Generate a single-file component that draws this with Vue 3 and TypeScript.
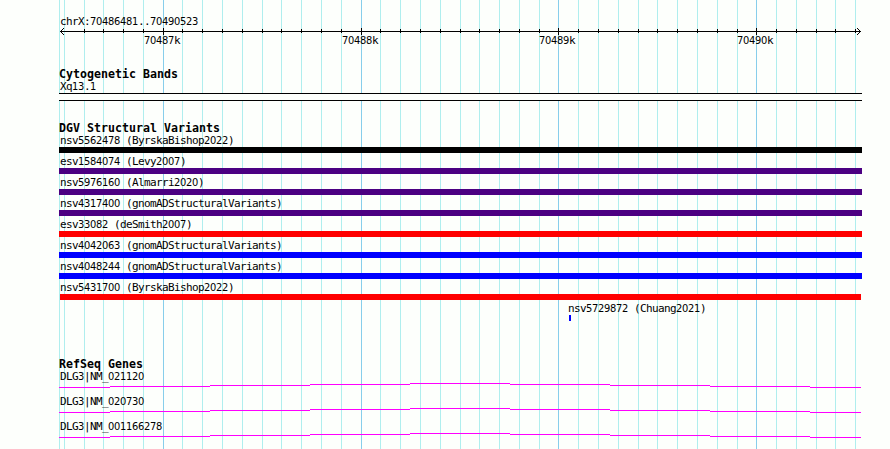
<script setup lang="ts">
import { defineComponent, h } from 'vue'

interface Variant {
  name: string
  tone: string
}

// Splits a label so that figures get their own face, on the same 6px pitch.
const PixelText = defineComponent({
  props: { text: { type: String, required: true } },
  setup(props) {
    return () =>
      h(
        'span',
        (props.text.match(/\d+|\D+/g) ?? []).map((part) =>
          /\d/.test(part) ? h('span', { class: 'figures' }, part) : part,
        ),
      )
  },
})

const minorLines = [
  59, 64, 84, 103, 123, 143, 182, 202, 222, 242, 262, 281, 301, 321, 341, 380, 400, 420, 440, 460,
  479, 499, 519, 539, 578, 598, 618, 638, 657, 677, 697, 717, 737, 776, 796, 816, 835, 855,
]
const majorLines = [163, 361, 558, 756]
const scaleLabels = ['70487k', '70488k', '70489k', '70490k']

const variants: Variant[] = [
  { name: 'nsv5562478 (ByrskaBishop2022)', tone: 'black' },
  { name: 'esv1584074 (Levy2007)', tone: 'indigo' },
  { name: 'nsv5976160 (Almarri2020)', tone: 'indigo' },
  { name: 'nsv4317400 (gnomADStructuralVariants)', tone: 'indigo' },
  { name: 'esv33082 (deSmith2007)', tone: 'red' },
  { name: 'nsv4042063 (gnomADStructuralVariants)', tone: 'blue' },
  { name: 'nsv4048244 (gnomADStructuralVariants)', tone: 'blue' },
  { name: 'nsv5431700 (ByrskaBishop2022)', tone: 'red inset' },
]

const genes = ['DLG3|NM_021120', 'DLG3|NM_020730', 'DLG3|NM_001166278']
const genePath =
  'M0 4.5H51M51 3.5H151M151 2.5H251M251 1.5H351M351 .5H451M451 1.5H551M551 2.5H651M651 3.5H751M751 4.5H802'
</script>

<template>
  <main class="browser">
    <svg class="grid" width="890" height="449" shape-rendering="crispEdges" aria-hidden="true">
      <rect v-for="x in minorLines" :key="x" :x="x" y="0" width="1" height="449" fill="#afeeee" />
      <rect v-for="x in majorLines" :key="x" :x="x" y="0" width="1" height="449" fill="#87ceeb" />
    </svg>
    <div class="content">
      <header class="ruler">
        <div class="label"><PixelText text="chrX:70486481..70490523" /></div>
        <svg class="axis" width="803" height="8" shape-rendering="crispEdges" aria-hidden="true">
          <rect x="1" y="3" width="801" height="1" />
          <template v-for="x in minorLines" :key="x">
            <rect v-if="x > 64" :x="x - 59" y="1" width="1" height="4" />
          </template>
          <rect v-for="x in majorLines" :key="x" :x="x - 59" y="0" width="1" height="7" />
          <path d="M2 2h1v1h-1zM3 1h1v1h-1zM4 0h1v1h-1zM2 4h1v1h-1zM3 5h1v1h-1zM4 6h1v1h-1z" />
          <path d="M800 2h1v1h-1zM799 1h1v1h-1zM798 0h1v1h-1zM800 4h1v1h-1zM799 5h1v1h-1zM798 6h1v1h-1z" />
        </svg>
        <div class="scale">
          <PixelText v-for="s in scaleLabels" :key="s" :text="s" />
        </div>
      </header>

      <section class="bands">
        <h2>Cytogenetic Bands</h2>
        <div class="label"><PixelText text="Xq13.1" /></div>
        <div class="band"></div>
      </section>

      <section class="variants">
        <h2>DGV Structural Variants</h2>
        <div v-for="v in variants" :key="v.name" class="variant">
          <div class="label"><PixelText :text="v.name" /></div>
          <div class="bar" :class="v.tone"></div>
        </div>
        <div class="variant short">
          <div class="label"><PixelText text="nsv5729872 (Chuang2021)" /></div>
          <div class="bar blue"></div>
        </div>
      </section>

      <section class="genes">
        <h2>RefSeq Genes</h2>
        <div v-for="g in genes" :key="g" class="gene">
          <div class="label"><PixelText :text="g" /></div>
          <svg class="intron" width="802" height="5" shape-rendering="crispEdges" aria-hidden="true">
            <path :d="genePath" fill="none" stroke="#ff00ff" stroke-width="1" />
          </svg>
        </div>
      </section>
    </div>
  </main>
</template>

<style>
body {
  margin: 0;
  background: #fdfffc;
}

.figures {
  font-family: 'DejaVu Sans Condensed', 'DejaVu Sans', sans-serif;
  font-stretch: condensed;
  letter-spacing: -0.3px;
}
</style>

<style scoped>
.browser {
  position: relative;
  width: 890px;
  height: 449px;
  overflow: hidden;
  color: #000;
  font-family: 'DejaVu Sans Mono', monospace;
  font-size: 11px;
  line-height: 12px;
  letter-spacing: -0.62px;
  white-space: pre;
}

.grid {
  position: absolute;
  inset: 0;
}

.content {
  position: relative;
  width: 803px;
  padding: 15px 0 0 59px;
}

.label {
  height: 12px;
  padding: 1px 0 0 1px;
}

h2 {
  height: 12px;
  margin: 0;
  font-size: 11.6px;
  line-height: 12px;
  letter-spacing: 0.02px;
}

.axis,
.intron {
  display: block;
}

.scale {
  display: grid;
  grid-template-columns: 198px 197px 198px auto;
  height: 12px;
  margin-top: -1px;
  padding-left: 85px;
}

.bands {
  margin-top: 21px;
}

.band {
  height: 6px;
  border-top: 1px solid #000;
  border-bottom: 1px solid #000;
  background: #fdfffc;
}

.variants {
  margin-top: 21px;
}

.variant {
  height: 21px;
}

.bar {
  height: 6px;
}

.black { background: #000; }
.indigo { background: #4b0082; }
.red { background: #f00; }
.blue { background: #00f; }

.inset {
  margin-right: 1px;
  margin-left: 1px;
}

.short {
  padding-left: 509px;
}

.short .label {
  padding-left: 0;
}

.short .bar {
  width: 2px;
  margin-left: 1px;
}

.genes {
  margin-top: 35px;
}

.gene {
  height: 25px;
}
</style>
